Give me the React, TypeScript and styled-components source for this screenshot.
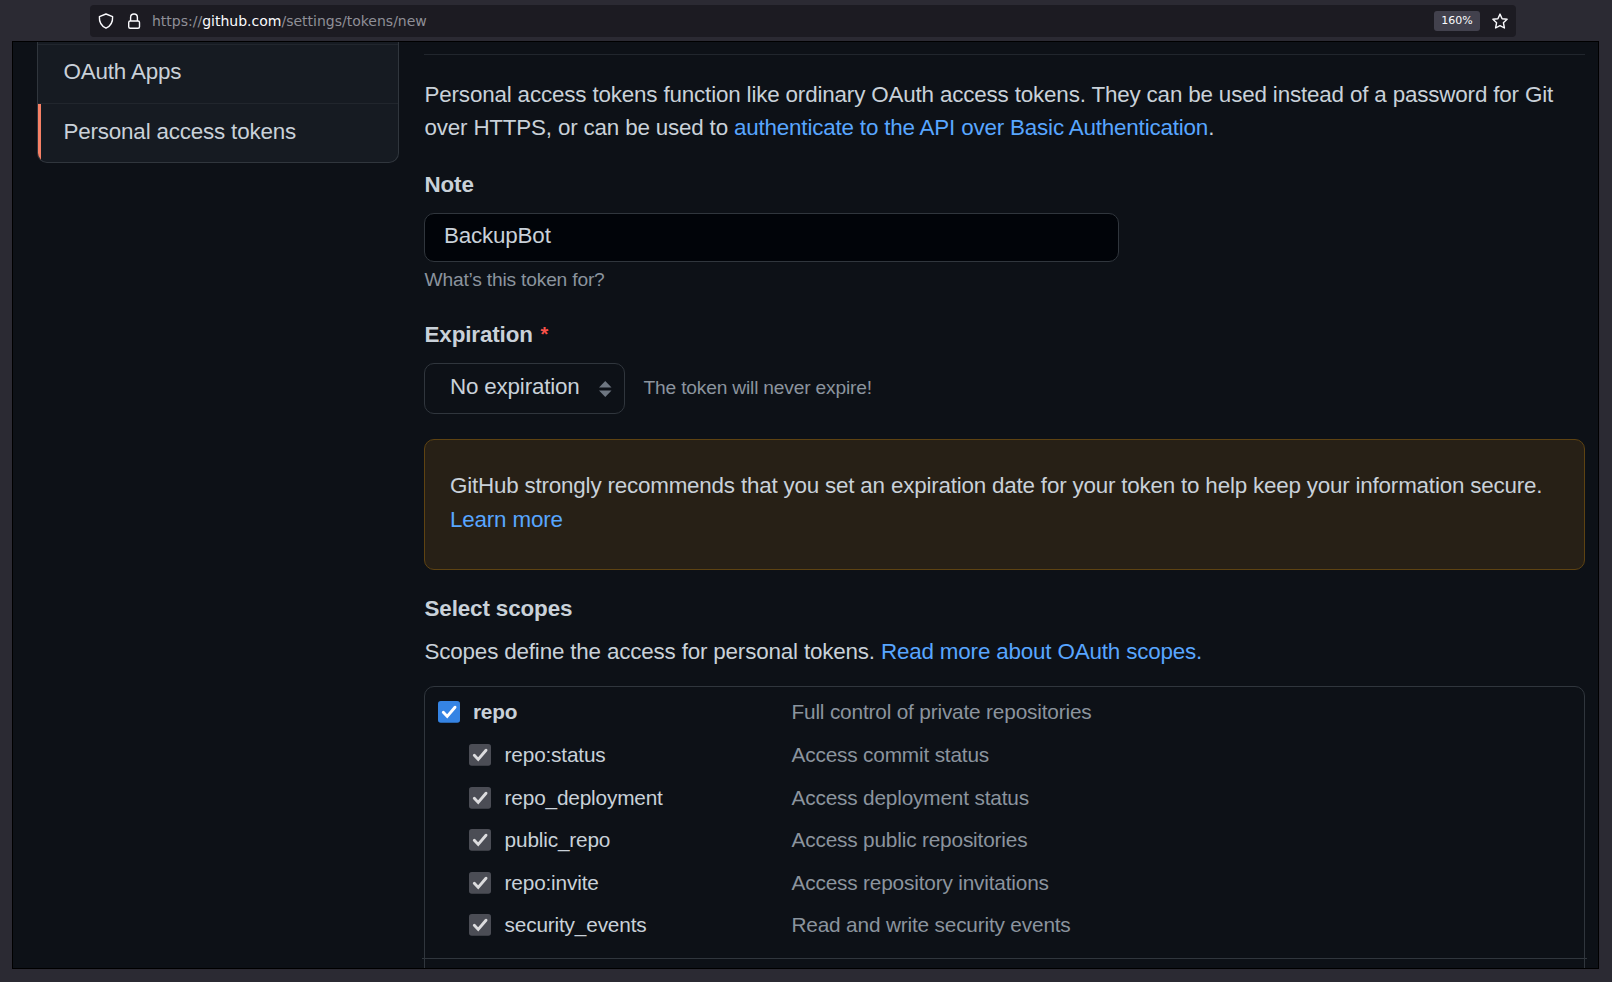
import React from "react";
import styled, { createGlobalStyle } from "styled-components";

const GlobalStyle = createGlobalStyle`
  * { box-sizing: border-box; }
  body { margin: 0; background: #2b2a33; overflow: hidden; }
`;

const sans = `"Liberation Sans", Arial, sans-serif`;

const Browser = styled.div`
  width: 1612px;
  height: 982px;
  display: flex;
  flex-direction: column;
  background: #2b2a33;
  padding: 5px 13px 13px 12px;
  font-family: ${sans};
  color: #c9d1d9;
`;

const UrlBar = styled.div`
  flex: none;
  height: 32px;
  margin: 0 83px 4px 78px;
  padding: 0 8px;
  border-radius: 4px;
  background: #1c1b22;
  display: flex;
  align-items: center;
`;

const ShieldIcon = styled.svg`
  width: 16px;
  height: 16px;
  margin-right: 12px;
`;

const LockIcon = styled(ShieldIcon)`
  margin-right: 10px;
`;

const Url = styled.div`
  flex: 1;
  font: 14px/20px "DejaVu Sans", sans-serif;
  color: #8f8f97;
  white-space: nowrap;
  b { font-weight: 400; color: #fbfbfe; }
`;

const Zoom = styled.div`
  width: 46px;
  height: 20px;
  margin-right: 12px;
  border-radius: 3px;
  background: #42414d;
  color: #fbfbfe;
  font: 11px/20px "DejaVu Sans", sans-serif;
  text-align: center;
`;

const Page = styled.div`
  flex: none;
  height: 928px;
  border: 1px solid #000;
  background: #0d1117;
  display: flex;
  overflow: hidden;
`;

const Sidebar = styled.nav`
  width: 362px;
  height: 121px;
  margin-left: 24px;
  flex: none;
  border: 1px solid #30363d;
  border-top: 0;
  border-radius: 0 0 10px 10px;
  background: #161b22;
  padding-top: 2px;
  overflow: hidden;
`;

const SideItem = styled.a<{ $active?: boolean }>`
  display: block;
  height: 59px;
  border-top: 1px solid #21262d;
  font-size: 22.4px;
  line-height: ${(p) => (p.$active ? 55 : 53)}px;
  padding-left: 25.5px;
  letter-spacing: -0.18px;
  box-shadow: ${(p) => (p.$active ? "inset 3px 0 0 #f78166" : "none")};
`;

const Main = styled.main`
  width: 1161px;
  margin-left: 25px;
  padding-top: 12px;
  flex: none;
`;

const Rule = styled.hr`
  height: 1px;
  margin: 0 0 23px;
  border: 0;
  background: #21262d;
`;

const Line = styled.div<{ $spacing?: number; $height?: number }>`
  font-size: 22.4px;
  line-height: ${(p) => p.$height ?? 34}px;
  letter-spacing: ${(p) => p.$spacing ?? -0.18}px;
  white-space: nowrap;
`;

const Paragraph = styled.div`
  padding-left: 0.5px;
  margin-bottom: 24px;
`;

const Link = styled.a`
  color: #58a6ff;
`;

const Label = styled(Line)`
  font-weight: 700;
  padding-left: 0.5px;
`;

const Required = styled.span`
  color: #f85149;
  font-size: 20px;
  line-height: 0;
  vertical-align: 1px;
  margin-left: 1.5px;
`;

const NoteInput = styled.div`
  width: 695px;
  height: 49px;
  margin: 11px 0 4px;
  padding: 5px 19px;
  border: 1px solid #30363d;
  border-radius: 10px;
  background: #010409;
`;

const Hint = styled.div`
  font-size: 19.2px;
  line-height: 27px;
  letter-spacing: -0.185px;
  color: #8b949e;
  white-space: nowrap;
`;

const NoteHint = styled(Hint)`
  padding-left: 0.5px;
  margin-bottom: 25px;
`;

const ExpirationRow = styled.div`
  display: flex;
  align-items: center;
  gap: 18.5px;
  height: 51px;
  margin: 11px 0 25px;
  > ${Hint} { margin-bottom: 3px; }
`;

const Select = styled.div`
  width: 201px;
  height: 51px;
  border: 1px solid #30363d;
  border-radius: 10px;
  padding: 0 12.5px 0 25px;
  display: flex;
  justify-content: space-between;
  align-items: center;
  ${Line} { margin-bottom: 3px; }
`;

const Arrows = styled.svg`
  width: 12.5px;
  height: 16px;
`;

const Warning = styled.section`
  height: 131px;
  border: 1px solid #5e4312;
  border-radius: 10px;
  background: #272016;
  padding: 29px 25px 0;
  margin-bottom: 22px;
`;

const ScopeText = styled(Line)`
  padding-left: 0.5px;
  margin: 9px 0 17px;
`;

const Scopes = styled.section`
  height: 300px;
  border: 1px solid #30363d;
  border-radius: 10px 10px 0 0;
  padding-top: 4.2px;
`;

const ScopeRow = styled.div<{ $child?: boolean }>`
  display: grid;
  grid-template-columns: ${(p) => (p.$child ? "35.6px 286.9px" : "34.9px 318.6px")} 1fr;
  padding-left: ${(p) => (p.$child ? 44 : 13)}px;
  height: 42.667px;
  line-height: 42.667px;
  font-size: 20.8px;
  letter-spacing: -0.175px;
`;

const Check = styled.svg`
  width: 22px;
  height: 22px;
  margin-top: 10px;
`;

const ScopeName = styled.span<{ $bold?: boolean }>`
  font-weight: ${(p) => (p.$bold ? 700 : 400)};
`;

const ScopeInfo = styled.span`
  color: #8b949e;
`;

const Divider = styled.div`
  height: 1px;
  margin: 10.8px -3px 0;
  background: #30363d;
`;

const scopes = [
  ["repo", "Full control of private repositories"],
  ["repo:status", "Access commit status"],
  ["repo_deployment", "Access deployment status"],
  ["public_repo", "Access public repositories"],
  ["repo:invite", "Access repository invitations"],
  ["security_events", "Read and write security events"],
];

function Checkbox({ primary }: { primary: boolean }) {
  return (
    <Check viewBox="0 0 22 22">
      <rect x="0" y="0" width="22" height="21.8" rx="2.8" fill={primary ? "#3584e4" : "#4b4d55"} />
      <path
        d="M5.3 11.3 9.2 15.4 17 6.2"
        fill="none"
        stroke={primary ? "#fff" : "#dcdcde"}
        strokeWidth="2.9"
        strokeLinecap="round"
      />
    </Check>
  );
}

export default function App() {
  return (
    <Browser>
      <GlobalStyle />
      <UrlBar>
        <ShieldIcon viewBox="0 0 16 16" fill="none" stroke="#fbfbfe" strokeWidth="1.4" strokeLinejoin="round">
          <path d="M8 1 14.6 3.7C14.9 8.6 12.5 13 8 15.2 3.5 13 1.1 8.6 1.4 3.7Z" />
        </ShieldIcon>
        <LockIcon viewBox="0 0 16 16" fill="none" stroke="#fbfbfe" strokeWidth="1.4">
          <rect x="2.7" y="8" width="10.8" height="7.2" rx="1.5" />
          <path d="M4.6 8V4.4a3.4 3.4 0 0 1 6.8 0V8" />
        </LockIcon>
        <Url>
          https://<b>github.com</b>/settings/tokens/new
        </Url>
        <Zoom>160%</Zoom>
        <svg width="16" height="16" viewBox="0 0 16 16" fill="none" stroke="#fbfbfe" strokeWidth="1.4" strokeLinejoin="round">
          <path d="M8 1.1 10.1 5.7 15.1 6.3 11.4 9.7 12.4 15 8 12.6 3.6 15 4.6 9.7.9 6.3 5.9 5.7Z" />
        </svg>
      </UrlBar>
      <Page>
        <Sidebar>
          <SideItem>OAuth Apps</SideItem>
          <SideItem $active>Personal access tokens</SideItem>
        </Sidebar>
        <Main>
          <Rule />
          <Paragraph>
            <Line $height={33} $spacing={-0.164}>
              Personal access tokens function like ordinary OAuth access tokens. They can be used instead of a password for Git
            </Line>
            <Line $height={33}>
              over HTTPS, or can be used to <Link>authenticate to the API over Basic Authentication</Link>.
            </Line>
          </Paragraph>
          <Label $spacing={-0.12}>Note</Label>
          <NoteInput>
            <Line>BackupBot</Line>
          </NoteInput>
          <NoteHint>What’s this token for?</NoteHint>
          <Label $spacing={-0.12}>
            Expiration <Required>*</Required>
          </Label>
          <ExpirationRow>
            <Select>
              <Line>No expiration</Line>
              <Arrows viewBox="0 0 12.5 16" fill="#6e7681">
                <path d="M0 6.5 6.25 0l6.25 6.5ZM0 9.5h12.5L6.25 16Z" />
              </Arrows>
            </Select>
            <Hint>The token will never expire!</Hint>
          </ExpirationRow>
          <Warning>
            <Line $spacing={-0.195}>
              GitHub strongly recommends that you set an expiration date for your token to help keep your information secure.
            </Line>
            <Line>
              <Link>Learn more</Link>
            </Line>
          </Warning>
          <Label $spacing={-0.12}>Select scopes</Label>
          <ScopeText $spacing={-0.17}>
            Scopes define the access for personal tokens. <Link>Read more about OAuth scopes.</Link>
          </ScopeText>
          <Scopes>
            {scopes.map(([name, info], i) => (
              <ScopeRow key={name} $child={i > 0}>
                <Checkbox primary={i === 0} />
                <ScopeName $bold={i === 0}>{name}</ScopeName>
                <ScopeInfo>{info}</ScopeInfo>
              </ScopeRow>
            ))}
            <Divider />
          </Scopes>
        </Main>
      </Page>
    </Browser>
  );
}
